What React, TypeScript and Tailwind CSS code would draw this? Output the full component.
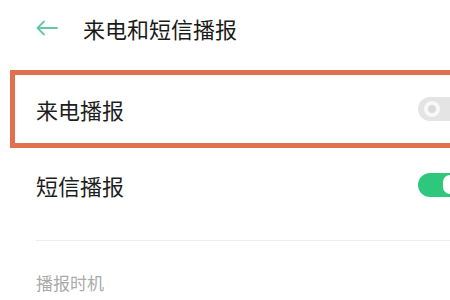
import React from "react";

export default function App() {
  return (
    <div
      className="w-[450px] h-[300px] bg-white overflow-hidden"
      style={{ fontFamily: '"Noto Sans CJK SC", "Noto Sans", sans-serif' }}
    >
      <div className="h-[55px] flex items-center">
        <svg
          className="ml-[36px]"
          width="22"
          height="16"
          viewBox="0 0 22 16"
          fill="none"
          stroke="#62c8a8"
          strokeWidth="1.8"
          strokeLinecap="round"
          strokeLinejoin="round"
        >
          <path d="M21 8H2M8 1.5L1.5 8L8 14.5" />
        </svg>
        <span className="ml-[25px] text-[22px] leading-none text-[#1a1a1a]">来电和短信播报</span>
      </div>
      <div className="mt-[15px] ml-[10px] -mr-[20px] h-[78px] border-[5px] border-[#e2704e] flex items-center justify-between">
        <span className="pl-[21px] text-[22px] leading-none text-[#1e1e1e]">来电播报</span>
        <div className="w-[47px] h-[24px] rounded-l-full bg-[#e4e4e4] flex items-center pl-[6px]">
          <div className="w-[16px] h-[16px] rounded-full bg-[#f8f8f8] flex items-center justify-center">
            <div className="w-[8px] h-[8px] rounded-full bg-[#dadada]" />
          </div>
        </div>
      </div>
      <div className="h-[73px] flex items-center justify-between">
        <span className="pl-[36px] text-[22px] leading-none text-[#1e1e1e]">短信播报</span>
        <div className="w-[32px] h-[24px] rounded-l-full bg-[#2fc77c] flex items-center justify-end">
          <div className="w-[7px] h-[19px] rounded-l-full bg-white" />
        </div>
      </div>
      <div className="mt-[19px] ml-[36px] h-px bg-[#ececec]" />
      <div className="mt-[33px] pl-[36px] text-[17px] leading-none text-[#aaaaaa]">播报时机</div>
    </div>
  );
}
